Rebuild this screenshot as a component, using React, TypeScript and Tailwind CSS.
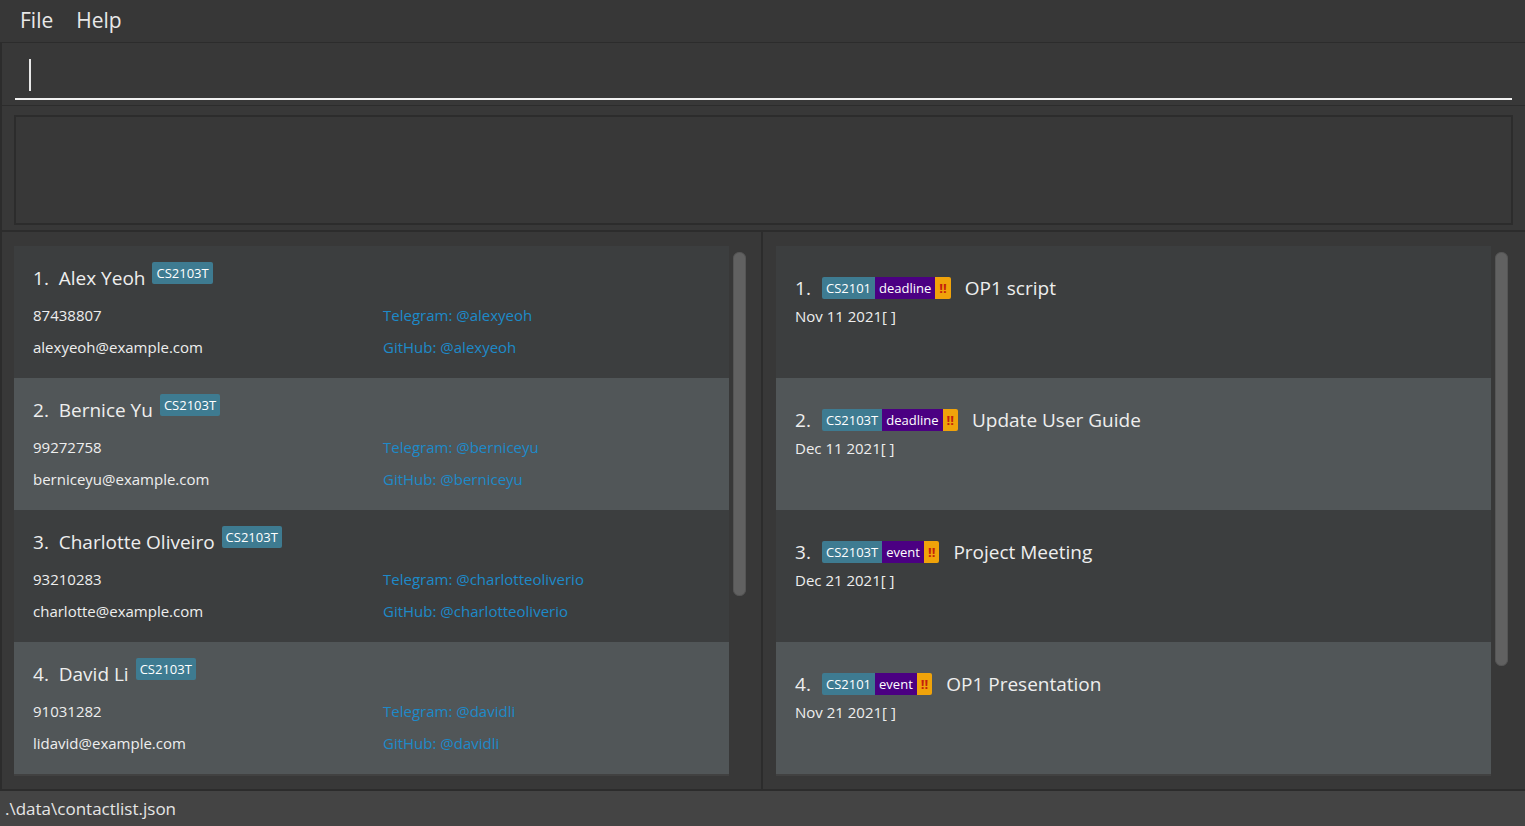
import React from 'react';

interface Person {
  name: string;
  phone: string;
  email: string;
  handle: string;
  tag: string;
}

interface Task {
  title: string;
  module: string;
  kind: string;
  date: string;
}

const people: Person[] = [
  { name: 'Alex Yeoh', phone: '87438807', email: 'alexyeoh@example.com', handle: 'alexyeoh', tag: 'CS2103T' },
  { name: 'Bernice Yu', phone: '99272758', email: 'berniceyu@example.com', handle: 'berniceyu', tag: 'CS2103T' },
  { name: 'Charlotte Oliveiro', phone: '93210283', email: 'charlotte@example.com', handle: 'charlotteoliverio', tag: 'CS2103T' },
  { name: 'David Li', phone: '91031282', email: 'lidavid@example.com', handle: 'davidli', tag: 'CS2103T' },
];

const tasks: Task[] = [
  { title: 'OP1 script', module: 'CS2101', kind: 'deadline', date: 'Nov 11 2021' },
  { title: 'Update User Guide', module: 'CS2103T', kind: 'deadline', date: 'Dec 11 2021' },
  { title: 'Project Meeting', module: 'CS2103T', kind: 'event', date: 'Dec 21 2021' },
  { title: 'OP1 Presentation', module: 'CS2101', kind: 'event', date: 'Nov 21 2021' },
];

const PersonCard: React.FC<{ person: Person; index: number }> = ({ person, index }) => {
  const bg = index % 2 === 0 ? 'bg-[#3c3e3f]' : 'bg-[#515658]';
  return (
    <div className={`${bg} h-[132px] shrink-0 pl-[19px] pt-[17px]`}>
      <div className="flex items-start h-[30px]">
        <span className="text-[19px] leading-[30px] text-[#eeeeee]">
          {index + 1}.&nbsp;&nbsp;{person.name}
        </span>
        <span className="ml-[7px] -mt-[1px] h-[22px] rounded-[2px] bg-[#3e7b91] px-[4px] text-[13px] leading-[22px] text-white">
          {person.tag}
        </span>
      </div>
      <div className="mt-[6px] flex text-[15px] leading-[32px]">
        <div className="w-[350px] text-[#eeeeee]">
          <div>{person.phone}</div>
          <div>{person.email}</div>
        </div>
        <div className="text-[#1d8ac9]">
          <div>Telegram: @{person.handle}</div>
          <div>GitHub: @{person.handle}</div>
        </div>
      </div>
    </div>
  );
};

const TaskCard: React.FC<{ task: Task; index: number }> = ({ task, index }) => {
  const bg = index % 2 === 0 ? 'bg-[#3c3e3f]' : 'bg-[#515658]';
  return (
    <div className={`${bg} h-[132px] shrink-0 pl-[19px] pt-[30px]`}>
      <div className="flex items-center h-[24px]">
        <span className="text-[19px] text-[#eeeeee] w-[27px]">{index + 1}.</span>
        <span className="h-[22px] rounded-l-[2px] bg-[#3e7b91] px-[4px] text-[13px] leading-[22px] text-white">
          {task.module}
        </span>
        <span className="h-[22px] bg-[#4b0082] px-[4px] text-[13px] leading-[22px] text-white">{task.kind}</span>
        <span className="h-[22px] rounded-r-[2px] bg-[#f0a30a] px-[4px] text-[13px] font-bold leading-[22px] text-[#c4200c]">
          !!
        </span>
        <span className="ml-[14px] text-[19px] text-[#eeeeee]">{task.title}</span>
      </div>
      <div className="mt-[4px] text-[15px] leading-[24px] text-[#eeeeee]">{task.date}[ ]</div>
    </div>
  );
};

const ScrollThumb: React.FC<{ height: string }> = ({ height }) => (
  <div className="w-[13px] shrink-0 pt-[6px]">
    <div className={`${height} rounded-[6px] border border-[#555555] bg-[#616161]`} />
  </div>
);

export default function App() {
  return (
    <div
      className="flex h-[826px] w-[1525px] flex-col overflow-hidden bg-[#383838] text-white"
      style={{ fontFamily: '"Open Sans", "Noto Sans", sans-serif' }}
    >
      {/* menu bar */}
      <div className="flex h-[42px] shrink-0 items-center gap-[23px] bg-[#373737] px-[20px] text-[21px] text-[#e8e8e8]">
        <span>File</span>
        <span>Help</span>
      </div>

      {/* command box */}
      <div className="h-[64px] shrink-0 border-y border-[#2c2c2c] border-l-2 pl-[13px] pr-[13px]">
        <div className="flex h-[57px] items-center border-b-2 border-[#f2f2f2] pl-[14px]">
          <div className="mt-[8px] h-[32px] w-[2px] bg-[#e8e8e8]" />
        </div>
      </div>

      {/* result display */}
      <div className="h-[126px] shrink-0 border-b-2 border-l-2 border-[#2c2c2c] px-[12px] pt-[9px]">
        <div className="h-[110px] border-2 border-[#2c2c2c] bg-[#383838]" />
      </div>

      {/* lists */}
      <div className="flex min-h-0 flex-1">
        <div className="flex w-[761px] border-l-2 border-[#2c2c2c] pl-[12px] pt-[14px]">
          <div className="flex w-[715px] flex-col overflow-hidden">
            {people.map((p, i) => (
              <PersonCard key={p.name} person={p} index={i} />
            ))}
            <div className="h-[2px] bg-[#414141]" />
          </div>
          <div className="ml-[4px]">
            <ScrollThumb height="h-[344px]" />
          </div>
        </div>
        <div className="w-[2px] bg-[#2c2c2c]" />
        <div className="flex flex-1 pl-[13px] pt-[14px]">
          <div className="flex w-[715px] flex-col overflow-hidden">
            {tasks.map((t, i) => (
              <TaskCard key={t.title} task={t} index={i} />
            ))}
            <div className="h-[2px] bg-[#414141]" />
          </div>
          <div className="ml-[4px]">
            <ScrollThumb height="h-[414px]" />
          </div>
        </div>
      </div>

      {/* status bar */}
      <div className="flex h-[37px] shrink-0 items-center border-t-2 border-[#2c2c2c] bg-[#444444] pl-[5px] text-[17px] text-[#e6e6e6]">
        .\data\contactlist.json
      </div>
    </div>
  );
}
